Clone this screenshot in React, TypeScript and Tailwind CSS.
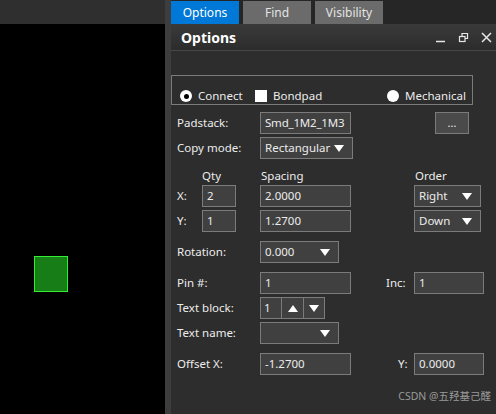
import type { ReactNode } from "react";

const font = { fontFamily: '"Noto Sans", "Noto Sans CJK SC", sans-serif' };

function Tri({ up = false }: { up?: boolean }) {
  return (
    <svg width="12" height="9" viewBox="0 0 12 9">
      <polygon points={up ? "6,1 11,8 1,8" : "1,1 11,1 6,8"} fill="#ffffff" />
    </svg>
  );
}

function Field({ value, w, className = "" }: { value: string; w: string; className?: string }) {
  return (
    <div className={`flex h-[22px] items-center border border-[#7b7b7b] bg-[#404040] px-[4px] text-[11.5px] text-[#ececec] ${w} ${className}`}>
      {value}
    </div>
  );
}

function Select({ value, w, className = "" }: { value: string; w: string; className?: string }) {
  return (
    <div className={`flex h-[22px] items-center justify-between border border-[#7b7b7b] bg-[#404040] pl-[4px] pr-[7px] text-[11.5px] text-[#ececec] ${w} ${className}`}>
      <span>{value}</span>
      <Tri />
    </div>
  );
}

function Label({ children, className = "" }: { children: ReactNode; className?: string }) {
  return <div className={`text-[11.5px] text-[#ececec] ${className}`}>{children}</div>;
}

export default function App() {
  return (
    <div className="flex h-[414px] w-[496px] overflow-hidden bg-black" style={font}>
      <div className="flex w-[165px] flex-col">
        <div className="h-[24px] bg-[#2f2f2f]" />
        <div className="flex-1 bg-black pl-[34px] pt-[232px]">
          <div className="h-[36px] w-[34px] border border-[#33ee33] bg-[#177d17]" />
        </div>
      </div>
      <div className="w-[6px] bg-[#3d3d3d]" />
      <div className="relative flex flex-1 flex-col bg-[#2d2d2d]">
        <div className="flex h-[24px] gap-[4px] bg-[#262626] pt-[1px]">
          <div className="flex w-[68px] items-center justify-center bg-[#0078d7] text-[12px] text-white">Options</div>
          <div className="flex w-[68px] items-center justify-center bg-[#6b6b6b] text-[12px] text-[#e4e4e4]">Find</div>
          <div className="flex w-[68px] items-center justify-center bg-[#6b6b6b] text-[12px] text-[#e4e4e4]">Visibility</div>
        </div>
        <div className="flex h-[27px] items-center justify-between border-b border-[#474747] bg-gradient-to-b from-[#3a3a3a] to-[#2c2c2c] pl-[10px] pr-[4px]">
          <div className="text-[14px] font-bold text-white">Options</div>
          <div className="flex items-center gap-[12px]">
            <svg width="11" height="11" viewBox="0 0 11 11">
              <line x1="1" y1="9.5" x2="10" y2="9.5" stroke="#e6e6e6" strokeWidth="1.5" />
            </svg>
            <svg width="11" height="11" viewBox="0 0 11 11">
              <rect x="1.5" y="4.5" width="5.5" height="5" fill="none" stroke="#e6e6e6" strokeWidth="1.2" />
              <path d="M4 4.5V1.5H9.5V6.5H7" fill="none" stroke="#e6e6e6" strokeWidth="1.2" />
            </svg>
            <svg width="11" height="11" viewBox="0 0 11 11">
              <path d="M1 1L10 10M10 1L1 10" stroke="#e6e6e6" strokeWidth="1.5" />
            </svg>
          </div>
        </div>

        <div className="mt-[24px] flex h-[30px] w-[302px] items-end border border-[#7a7a7a] pl-[8px] text-[11.5px] leading-[16px] text-[#ececec]">
          <div className="flex w-[75px] items-center gap-[6px]">
            <div className="flex h-[12px] w-[12px] items-center justify-center rounded-full bg-white">
              <div className="h-[5px] w-[5px] rounded-full bg-black" />
            </div>
            <span>Connect</span>
          </div>
          <div className="flex items-center gap-[6px]">
            <div className="h-[12px] w-[12px] bg-white" />
            <span>Bondpad</span>
          </div>
          <div className="ml-auto mr-[6px] flex items-center gap-[6px]">
            <div className="h-[12px] w-[12px] rounded-full bg-white" />
            <span>Mechanical</span>
          </div>
        </div>

        <div className="mt-[7px] flex items-center pl-[6px]">
          <Label className="w-[83px]">Padstack:</Label>
          <Field value="Smd_1M2_1M3" w="w-[91px] tracking-[-0.2px]" />
          <div className="ml-[84px] flex h-[22px] w-[34px] items-center justify-center border border-[#7b7b7b] bg-[#4a4a4a] text-[11px] text-[#ececec]">...</div>
        </div>
        <div className="mt-[3px] flex items-center pl-[6px]">
          <Label className="w-[83px]">Copy mode:</Label>
          <Select value="Rectangular" w="w-[93px]" />
        </div>

        <div className="mt-[8px] flex h-[17px] items-center pl-[31px]">
          <Label className="w-[59px]">Qty</Label>
          <Label className="w-[154px]">Spacing</Label>
          <Label>Order</Label>
        </div>
        <div className="mt-[1px] flex items-center pl-[6px]">
          <Label className="w-[25px]">X:</Label>
          <Field value="2" w="w-[34px]" />
          <Field value="2.0000" w="w-[91px]" className="ml-[24px]" />
          <Select value="Right" w="w-[67px]" className="ml-[63px]" />
        </div>
        <div className="mt-[3px] flex items-center pl-[6px]">
          <Label className="w-[25px]">Y:</Label>
          <Field value="1" w="w-[34px]" />
          <Field value="1.2700" w="w-[91px]" className="ml-[24px]" />
          <Select value="Down" w="w-[67px]" className="ml-[63px]" />
        </div>

        <div className="mt-[9px] flex items-center pl-[6px]">
          <Label className="w-[83px]">Rotation:</Label>
          <Select value="0.000" w="w-[79px]" />
        </div>
        <div className="mt-[9px] flex items-center pl-[6px]">
          <Label className="w-[83px]">Pin #:</Label>
          <Field value="1" w="w-[91px]" />
          <Label className="ml-[35px] w-[28px]">Inc:</Label>
          <Field value="1" w="w-[70px]" />
        </div>
        <div className="mt-[3px] flex items-center pl-[6px]">
          <Label className="w-[83px]">Text block:</Label>
          <div className="flex h-[22px] border border-[#7b7b7b] bg-[#404040] text-[11.5px] text-[#ececec]">
            <div className="flex w-[20px] items-center pl-[3px]">1</div>
            <div className="flex w-[22px] items-center justify-center border-l border-[#7b7b7b]"><Tri up /></div>
            <div className="flex w-[21px] items-center justify-center border-l border-[#7b7b7b]"><Tri /></div>
          </div>
        </div>
        <div className="mt-[3px] flex items-center pl-[6px]">
          <Label className="w-[83px]">Text name:</Label>
          <Select value="" w="w-[79px]" />
        </div>
        <div className="mt-[9px] flex items-center pl-[6px]">
          <Label className="w-[83px]">Offset X:</Label>
          <Field value="-1.2700" w="w-[91px]" />
          <Label className="ml-[47px] w-[16px]">Y:</Label>
          <Field value="0.0000" w="w-[70px]" />
        </div>

        <div className="absolute bottom-[9px] right-[5px] text-[10.5px] text-[#9a9a9a]">CSDN @五羟基己醛</div>
      </div>
    </div>
  );
}
